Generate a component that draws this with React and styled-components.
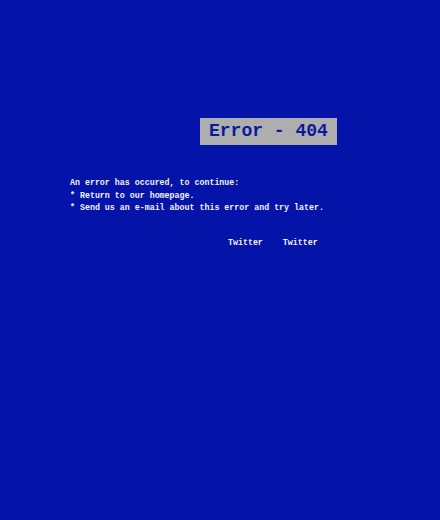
import React from 'react';
import styled, { createGlobalStyle } from 'styled-components';

const GlobalStyle = createGlobalStyle`
  html, body {
    margin: 0;
    padding: 0;
    background: #0414a8;
  }
  body {
    min-height: 520px;
  }
`;

const Screen = styled.div`
  min-height: 520px;
  background: #0414a8;
  color: #f2f2f2;
  font-family: "Liberation Mono", "DejaVu Sans Mono", monospace;
  padding: 118px 30px 0 70px;
  box-sizing: border-box;
`;

const Title = styled.div`
  padding-left: 130px;
  margin-bottom: 32px;
`;

const Neg = styled.span`
  display: inline-block;
  background: #aeaeae;
  color: #0b1a9c;
  font-size: 18px;
  font-weight: bold;
  line-height: 27px;
  padding: 0 9px;
`;

const Text = styled.p`
  margin: 0;
  font-size: 8.3px;
  font-weight: bold;
  line-height: 12.5px;
  white-space: pre;
`;

const Nav = styled.nav`
  display: flex;
  gap: 20px;
  margin-top: 22px;
  padding-left: 158px;
  font-size: 8.3px;
  font-weight: bold;
  line-height: 12px;
`;

const Link = styled.a`
  color: #f2f2f2;
  text-decoration: none;
`;

const lines = [
  'An error has occured, to continue:',
  '* Return to our homepage.',
  '* Send us an e-mail about this error and try later.',
];

const App = () => {
  return (
    <>
      <GlobalStyle />
      <Screen>
        <Title>
          <Neg>Error - 404</Neg>
        </Title>
        {lines.map((line, index) => (
          <Text key={index}>{line}</Text>
        ))}
        <Nav>
          <Link href="#">Twitter</Link>
          <Link href="#">Twitter</Link>
        </Nav>
      </Screen>
    </>
  );
};

export default App;
